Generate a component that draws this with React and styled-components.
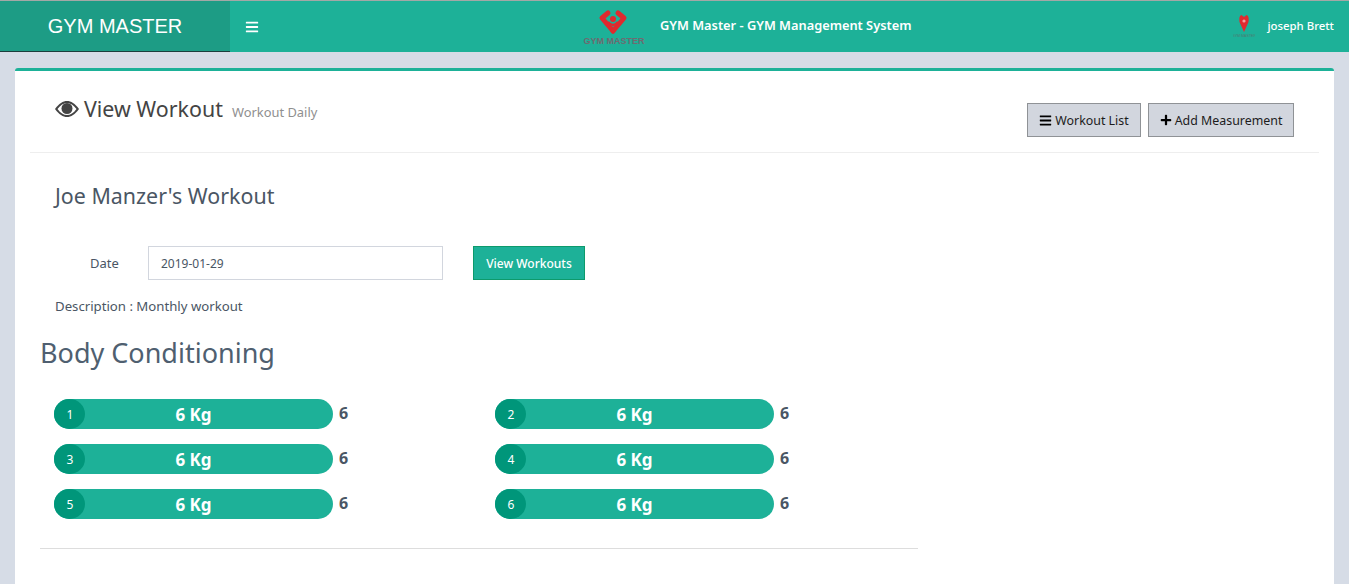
import React from 'react';
import styled, { createGlobalStyle } from 'styled-components';
import { FaBars, FaPlus } from 'react-icons/fa';

const Global = createGlobalStyle`
  html, body {
    margin: 0;
    height: 100%;
    overflow: hidden;
    background: #d6dce6;
  }
  * { box-sizing: border-box; }
  body {
    font-family: "Noto Sans", "Open Sans", sans-serif;
    font-size: 13px;
    color: #4a5664;
  }
`;

const TopBar = styled.header`
  height: 52px;
  display: flex;
  align-items: stretch;
  background: #1db198;
  border-top: 1px solid #a3a8a6;
`;

const Brand = styled.div`
  width: 230px;
  background: #1d9c85;
  border-bottom: 1px solid #1c3d3c;
  color: #fff;
  font-family: "Liberation Sans", sans-serif;
  font-size: 20px;
  display: flex;
  align-items: center;
  justify-content: center;
`;

const Burger = styled.div`
  width: 43px;
  color: #fff;
  display: flex;
  align-items: center;
  justify-content: center;
  font-size: 14px;
`;

const Center = styled.div`
  display: flex;
  align-items: center;
  margin-left: 309px;
`;

const BarTitle = styled.span`
  color: #fff;
  font-size: 12.8px;
  font-weight: 600;
  margin-left: 14px;
  padding-bottom: 3px;
`;

const UserBox = styled.div`
  margin-left: auto;
  padding: 0 15px 3px 0;
  display: flex;
  align-items: center;
  gap: 12px;
  color: #fff;
  font-size: 11.4px;
  font-weight: 500;
`;

const Card = styled.main`
  margin: 16px 15px 0;
  min-height: 600px;
  background: #fff;
  border-top: 3px solid #1db198;
  border-radius: 3px 3px 0 0;
`;

const PageHead = styled.div`
  margin: 0 15px;
  height: 82px;
  padding: 0 25px;
  border-bottom: 1px solid #eee;
  display: flex;
  justify-content: space-between;
`;

const Heading = styled.div`
  display: flex;
  align-items: flex-start;
  padding-top: 23px;
  color: #444;
`;

const HeadTitle = styled.h1`
  margin: 0;
  font-size: 21.4px;
  line-height: 29px;
  font-weight: 400;
  display: flex;
  align-items: center;
  gap: 5px;
`;

const EyeIcon = styled.svg`
  width: 24px;
  height: 16px;
  fill: currentColor;
`;

const HeadSub = styled.small`
  margin: 9px 0 0 9px;
  font-size: 12.9px;
  line-height: 18px;
  color: #8f8f8f;
`;

const HeadActions = styled.div`
  display: flex;
  gap: 7px;
  padding-top: 32px;
`;

const GreyButton = styled.button`
  height: 34px;
  width: ${(p) => p.$w}px;
  background: #d2d6de;
  border: 1px solid #8f9296;
  color: #1c1c1c;
  font: inherit;
  font-size: 12.4px;
  display: flex;
  align-items: center;
  justify-content: center;
  gap: 3px;
  padding: 0;

  svg {
    color: #000;
  }
`;

const Body = styled.div`
  padding: 0 25px;
`;

const Owner = styled.h3`
  margin: 29px 0 0 15px;
  font-size: 21.4px;
  line-height: 28px;
  font-weight: 400;
  color: #4a5664;
`;

const DateRow = styled.div`
  margin-top: 36px;
  display: flex;
  align-items: center;
`;

const DateLabel = styled.label`
  width: 108px;
  padding-left: 50px;
  font-size: 13px;
`;

const DateInput = styled.div`
  width: 295px;
  height: 34px;
  border: 1px solid #d2d6de;
  padding-left: 12px;
  display: flex;
  align-items: center;
  font-size: 12px;
`;

const ViewButton = styled.button`
  margin-left: 30px;
  width: 112px;
  height: 34px;
  background: #1db198;
  border: 1px solid #0d9a6c;
  color: #fff;
  font: inherit;
  font-size: 12px;
  font-weight: 500;
  padding: 0;
`;

const Description = styled.p`
  margin: 16px 0 0 15px;
  font-size: 13.2px;
  line-height: 20px;
`;

const SectionTitle = styled.h2`
  margin: 19px 0 0;
  font-size: 27px;
  line-height: 36px;
  font-weight: 400;
  color: #4f5f70;
`;

const Sets = styled.div`
  width: 878px;
  margin-top: 28px;
  padding: 0 0 29px 14px;
  border-bottom: 1px solid #ddd;
  display: grid;
  grid-template-columns: 441px 1fr;
  row-gap: 15px;
`;

const SetItem = styled.div`
  display: flex;
  align-items: center;
`;

const Pill = styled.div`
  position: relative;
  width: 279px;
  height: 30px;
  border-radius: 15px;
  background: #1db198;
  color: #fff;
  font-size: 17px;
  font-weight: 700;
  display: flex;
  align-items: center;
  justify-content: center;
`;

const PillIndex = styled.span`
  position: absolute;
  left: 0;
  top: 0;
  width: 31px;
  height: 30px;
  padding-left: 1px;
  border-radius: 50%;
  background: #00967a;
  font-size: 12px;
  font-weight: 400;
  display: flex;
  align-items: center;
  justify-content: center;
`;

const Reps = styled.span`
  margin: -3px 0 0 6px;
  font-size: 16px;
  font-weight: 700;
  color: #4a5664;
`;

const Logo = () => (
  <svg width="64" height="46" viewBox="0 0 64 46">
    <g fill="none" stroke="#e02a2e" strokeWidth="5" strokeLinejoin="round" strokeLinecap="round">
      <path d="M26 9 L20 14 L31 27" />
      <path d="M36 9 L42 14 L31 27" />
    </g>
    <path d="M26 18 Q31 24 36 18" fill="none" stroke="#e02a2e" strokeWidth="2.5" />
    <circle cx="31" cy="15" r="3" fill="#e02a2e" />
    <text x="32" y="40" fontSize="9" fontWeight="700" textAnchor="middle" fill="#6f6a70" fontFamily="Liberation Sans">
      GYM MASTER
    </text>
  </svg>
);

const UserPic = () => (
  <svg width="22" height="30" viewBox="0 0 22 30">
    <path d="M11 22 L6.5 12 Q5.5 6 8.5 5 L11 7 L13.5 5 Q16.5 6 15.5 12 Z" fill="#e02a2e" />
    <circle cx="11" cy="11" r="1.6" fill="#f2a0a0" />
    <text x="11" y="27" fontSize="3.6" textAnchor="middle" fill="#4f7a70" fontFamily="Liberation Sans">
      GYM MASTER
    </text>
  </svg>
);

const Eye = () => (
  <EyeIcon viewBox="0 0 24 16">
    <path
      fillRule="evenodd"
      d="M0 8 C4 2.5 8 0 12 0 C16 0 20 2.5 24 8 C20 13.5 16 16 12 16 C8 16 4 13.5 0 8 Z M2.5 8 C5.5 12 8.5 14 12 14 C15.5 14 18.5 12 21.5 8 C18.5 4 15.5 2 12 2 C8.5 2 5.5 4 2.5 8 Z"
    />
    <circle cx="12" cy="7.5" r="5.5" />
  </EyeIcon>
);

const sets = [1, 2, 3, 4, 5, 6];

export default function App() {
  return (
    <>
      <Global />
      <TopBar>
        <Brand>GYM MASTER</Brand>
        <Burger>
          <FaBars />
        </Burger>
        <Center>
          <Logo />
          <BarTitle>GYM Master - GYM Management System</BarTitle>
        </Center>
        <UserBox>
          <UserPic />
          joseph Brett
        </UserBox>
      </TopBar>
      <Card>
        <PageHead>
          <Heading>
            <HeadTitle>
              <Eye />
              View Workout
            </HeadTitle>
            <HeadSub>Workout Daily</HeadSub>
          </Heading>
          <HeadActions>
            <GreyButton $w={114}>
              <FaBars size={13} />
              Workout List
            </GreyButton>
            <GreyButton $w={146}>
              <FaPlus size={12} />
              Add Measurement
            </GreyButton>
          </HeadActions>
        </PageHead>
        <Body>
          <Owner>Joe Manzer's Workout</Owner>
          <DateRow>
            <DateLabel>Date</DateLabel>
            <DateInput>2019-01-29</DateInput>
            <ViewButton>View Workouts</ViewButton>
          </DateRow>
          <Description>Description : Monthly workout</Description>
          <SectionTitle>Body Conditioning</SectionTitle>
          <Sets>
            {sets.map((n) => (
              <SetItem key={n}>
                <Pill>
                  <PillIndex>{n}</PillIndex>
                  6 Kg
                </Pill>
                <Reps>6</Reps>
              </SetItem>
            ))}
          </Sets>
        </Body>
      </Card>
    </>
  );
}
